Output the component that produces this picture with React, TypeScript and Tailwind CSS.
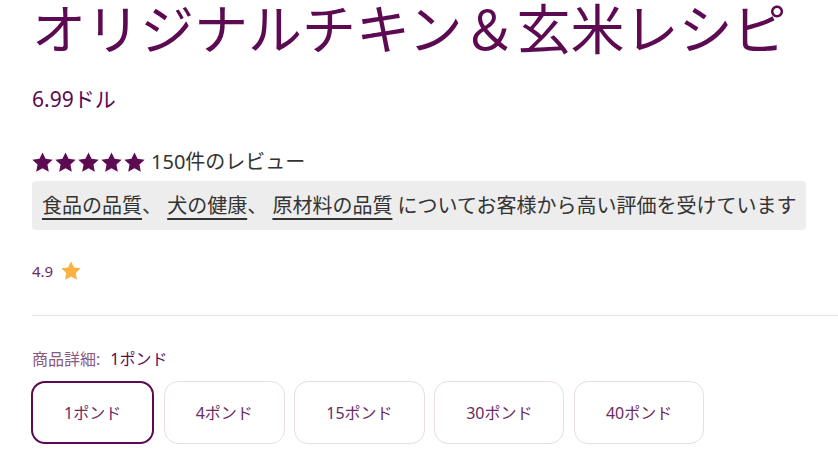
import React from "react";

const StarIcon: React.FC<{ className?: string }> = ({ className }) => (
  <svg viewBox="0 0 20 20" className={className} fill="currentColor">
    <path d="M10 0.4l2.9 6.1 6.8.8-5 4.7 1.3 6.8L10 15.4l-6 3.4 1.3-6.8-5-4.7 6.8-.8z" />
  </svg>
);

const sizes = ["1ポンド", "4ポンド", "15ポンド", "30ポンド", "40ポンド"];

export default function App() {
  const selected = "1ポンド";

  return (
    <div
      className="bg-white min-h-screen pl-8 text-[#5c0a52]"
      style={{ fontFamily: '"Noto Sans", "Noto Sans CJK JP", sans-serif' }}
    >
      <h1 className="-mt-[4px] text-[54px] leading-[66px] font-normal tracking-normal">
        オリジナルチキン＆玄米レシピ
      </h1>

      <div className="mt-[23px] text-[21px] leading-[28px]">6.99ドル</div>

      <div className="mt-[35px] flex items-center">
        <div className="flex items-center gap-[2px]">
          {[0, 1, 2, 3, 4].map((i) => (
            <StarIcon key={i} className="w-[21px] h-[21px] text-[#5c0a52]" />
          ))}
        </div>
        <span className="ml-[6px] text-[20px] leading-[28px] text-[#333333]">
          150件のレビュー
        </span>
      </div>

      <div className="mt-[5px] inline-block rounded bg-[#ededed] px-[10px] py-[9px] text-[20px] leading-[31px] text-[#333333]">
        <span className="underline underline-offset-[5px] decoration-[1.5px]">食品の品質</span>
        、 <span className="underline underline-offset-[5px] decoration-[1.5px]">犬の健康</span>
        、 <span className="underline underline-offset-[5px] decoration-[1.5px]">原材料の品質</span>{" "}
        についてお客様から高い評価を受けています
      </div>

      <div className="mt-[31px] flex items-center gap-[8px]">
        <span className="text-[15px] leading-[20px] text-[#6b2a63]">4.9</span>
        <StarIcon className="w-[20px] h-[20px] text-[#fbb040]" />
      </div>

      <div className="mt-[34px] border-t border-[#eddfe7]" />

      <div className="mt-[33px] text-[16px] leading-[20px]">
        <span className="text-[#8a5a82]">商品詳細:</span>
        <span className="ml-[10px] text-[#5c0a52]">{selected}</span>
      </div>

      <div className="mt-[12px] -ml-px flex gap-[9.5px]">
        {sizes.map((s) => (
          <button
            key={s}
            className={
              s === selected
                ? "h-[63px] rounded-[14px] border-2 border-[#5c0a52] px-[31px] text-[16px] text-[#6b2a63]"
                : "h-[63px] rounded-[14px] border border-[#eadbe6] px-[31px] text-[16px] text-[#6b2a63]"
            }
          >
            {s}
          </button>
        ))}
      </div>
    </div>
  );
}
